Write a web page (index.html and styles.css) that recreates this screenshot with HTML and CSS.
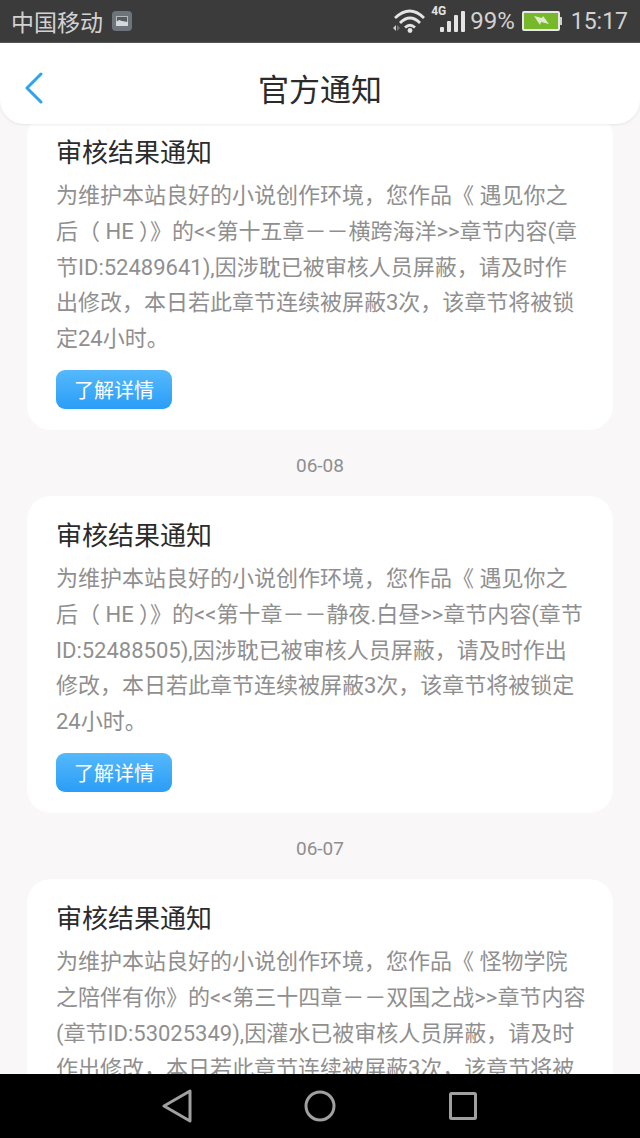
FILE: index.html
```html
<!DOCTYPE html>
<html lang="zh-CN">
<head>
  <meta charset="UTF-8">
  <meta name="viewport" content="width=device-width, initial-scale=1.0">
  <title>官方通知</title>
  <link rel="stylesheet" href="styles.css">
</head>
<body>
  <div class="screen">
    <div class="status-bar">
      <div class="status-left">
        <span class="carrier">中国移动</span>
        <svg class="pic-icon" width="20" height="20" viewBox="0 0 20 20">
          <rect width="20" height="20" rx="4" fill="#6d747b"/>
          <rect x="4.5" y="5.5" width="11" height="9" fill="#555b61" stroke="#b4b9bd"/>
          <path d="M4 15v-4l3-2 3 1 6 1v4z" fill="#d5d8da"/>
        </svg>
      </div>
      <div class="status-right">
        <svg class="wifi-icon" width="32" height="24" viewBox="0 0 32 24" fill="none" stroke="#e4e4e4" stroke-width="2.8">
          <path d="M2 9Q17 -5 31 9"/>
          <path d="M7 14Q17 4 27 14"/>
          <path d="M12 18.5Q17 14 22 18.5"/>
          <circle cx="17" cy="21.5" r="2.4" fill="#e4e4e4" stroke="none"/>
          <path d="M0 19l3-3v6z" fill="#cfcfcf" stroke="none"/>
          <path d="M4 16l3 3-3 3z" fill="#777" stroke="none"/>
        </svg>
        <div class="signal">
          <span class="net">4G</span>
          <svg width="27" height="23" viewBox="0 0 27 23" fill="#e4e4e4">
            <rect x="1" y="17" width="4" height="5" rx="1"/>
            <rect x="8" y="11" width="4" height="11" rx="1"/>
            <rect x="15" y="5" width="4" height="17" rx="1"/>
            <rect x="22" y="1" width="4" height="21" rx="1"/>
          </svg>
        </div>
        <span class="battery-pct">99%</span>
        <svg class="battery" width="40" height="20" viewBox="0 0 40 20">
          <rect x="1" y="1" width="36" height="18" rx="1" fill="#76b82a" stroke="#e8e8e8" stroke-width="2"/>
          <rect x="38" y="6" width="2" height="8" fill="#cfcfcf"/>
          <path d="M12 5l8 2 1-2 6 8-8-2-1 3z" fill="#dcebc8"/>
        </svg>
        <span class="clock">15:17</span>
      </div>
    </div>

    <header class="top-bar">
      <svg class="back" width="20" height="32" viewBox="0 0 20 32" fill="none" stroke="#2ea3ee" stroke-width="3" stroke-linecap="round" stroke-linejoin="round">
        <path d="M17 2L3 16l14 14"/>
      </svg>
      <h1>官方通知</h1>
    </header>

    <main class="list">
      <section class="card">
        <h2>审核结果通知</h2>
        <p>为维护本站良好的小说创作环境，您作品《 遇见你之后（ HE ）》的&lt;&lt;第十五章－－横跨海洋&gt;&gt;章节内容(章节ID:52489641),因涉耽已被审核人员屏蔽，请及时作出修改，本日若此章节连续被屏蔽3次，该章节将被锁定24小时。</p>
        <button type="button">了解详情</button>
      </section>
      <div class="date">06-08</div>
      <section class="card">
        <h2>审核结果通知</h2>
        <p>为维护本站良好的小说创作环境，您作品《 遇见你之后（ HE ）》的&lt;&lt;第十章－－静夜.白昼&gt;&gt;章节内容(章节ID:52488505),因涉耽已被审核人员屏蔽，请及时作出修改，本日若此章节连续被屏蔽3次，该章节将被锁定24小时。</p>
        <button type="button">了解详情</button>
      </section>
      <div class="date">06-07</div>
      <section class="card">
        <h2>审核结果通知</h2>
        <p>为维护本站良好的小说创作环境，您作品《 怪物学院之陪伴有你》的&lt;&lt;第三十四章－－双国之战&gt;&gt;章节内容(章节ID:53025349),因灌水已被审核人员屏蔽，请及时作出修改，本日若此章节连续被屏蔽3次，该章节将被</p>
      </section>
    </main>

    <nav class="nav-bar">
      <svg width="32" height="34" viewBox="0 0 32 34" fill="none" stroke="#a0a0a0" stroke-width="3" stroke-linejoin="round">
        <path d="M2 17L28 2v30z"/>
      </svg>
      <svg width="32" height="32" viewBox="0 0 32 32" fill="none" stroke="#a0a0a0" stroke-width="3">
        <circle cx="16" cy="16" r="14"/>
      </svg>
      <svg width="28" height="28" viewBox="0 0 28 28" fill="none" stroke="#a0a0a0" stroke-width="3" stroke-linejoin="round">
        <rect x="1.5" y="1.5" width="25" height="25" rx="1"/>
      </svg>
    </nav>
  </div>
</body>
</html>
```

FILE: styles.css
```css
* {
  box-sizing: border-box;
}
body {
  margin: 0;
  font-family: Roboto, "Noto Sans CJK SC", sans-serif;
  background-color: #f9f7f8;
}
.screen {
  width: 640px;
  height: 1138px;
  display: flex;
  flex-direction: column;
  overflow: hidden;
}

/* status bar */
.status-bar {
  flex: none;
  height: 43px;
  background-color: #3b3b3b;
  border-bottom: 1px solid #555;
  padding: 0 12px;
  display: flex;
  justify-content: space-between;
  align-items: center;
  color: #d2d2d2;
}
.status-left, .status-right {
  display: flex;
  align-items: center;
}
.carrier {
  font-size: 23px;
  margin-left: -1px;
}
.pic-icon {
  margin-left: 9px;
}
.wifi-icon {
  margin-right: 5px;
}
.signal {
  position: relative;
  width: 36px;
  display: flex;
  justify-content: flex-end;
}
.net {
  position: absolute;
  left: 1px;
  top: -6px;
  font-size: 12px;
  font-weight: 700;
  color: #e4e4e4;
}
.battery-pct {
  font-size: 24px;
  margin-left: 4px;
}
.battery {
  margin-left: 7px;
}
.clock {
  font-size: 23px;
  margin-left: 9px;
}

/* header */
.top-bar {
  flex: none;
  position: relative;
  z-index: 2;
  height: 81px;
  padding-top: 8px;
  background: white;
  border-radius: 0 0 24px 24px;
  box-shadow: 0 1px 3px rgba(0, 0, 0, 0.08);
  display: grid;
  grid-template-columns: 1fr auto 1fr;
  align-items: center;
}
.top-bar h1 {
  grid-column: 2;
  grid-row: 1;
  margin: 0;
  font-size: 31px;
  font-weight: 400;
  color: #2b2b2b;
}
.back {
  grid-column: 1;
  grid-row: 1;
  margin-left: 24px;
}

/* notice list */
.list {
  flex: 1;
  min-height: 0;
  overflow: hidden;
  margin-top: -11px;
  padding: 0 27px;
}
.card {
  background: white;
  border-radius: 24px;
  padding: 21px 26px 21px 29px;
}
.card h2 {
  margin: 0;
  font-size: 26px;
  line-height: 38px;
  font-weight: 400;
  color: #2b2b2b;
}
.card p {
  margin: 6px 0 13px;
  font-size: 22px;
  line-height: 35.8px;
  color: #8f8f8f;
}
.card button {
  display: block;
  width: 116px;
  height: 39px;
  padding: 0;
  border: none;
  border-radius: 9px;
  background: linear-gradient(#55b9fb, #2a9df7);
  color: white;
  font-family: inherit;
  font-size: 20px;
}
.date {
  height: 66px;
  line-height: 72px;
  text-align: center;
  font-size: 19px;
  color: #8f8f8f;
}

/* bottom navigation */
.nav-bar {
  flex: none;
  height: 64px;
  background: black;
  display: grid;
  grid-template-columns: repeat(3, 142.5px);
  justify-content: center;
  justify-items: center;
  align-items: center;
}
```
